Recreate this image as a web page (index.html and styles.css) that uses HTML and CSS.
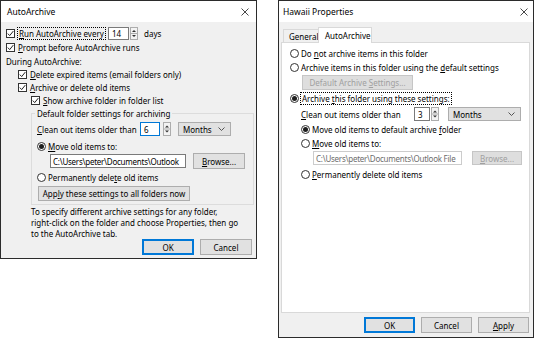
FILE: index.html
```html
<!DOCTYPE html>
<html>
<head>
<meta charset="utf-8">
<title>AutoArchive</title>
<link rel="stylesheet" href="styles.css">
</head>
<body>
<div class="desk">
  <div class="dlg dlg-left">
    <div class="titlebar tl"><span class="title">AutoArchive</span><svg class="close" width="8" height="8" viewBox="0 0 8 8"><path d="M0.5 0.5L7.5 7.5M7.5 0.5L0.5 7.5" stroke="#333" stroke-width="0.9" fill="none"/></svg></div>
    <div class="body">
      <div class="row l1 r1">
        <span class="cb"><svg width="7" height="7" viewBox="0 0 7 7"><polyline points="0.8,3.6 2.7,5.6 6.3,1.1" fill="none" stroke="#222" stroke-width="1"/></svg></span>
        <span class="lblbox w88"><span class="focus"><u>R</u>un AutoArchive every</span></span>
        <span class="input w21">14</span>
        <span class="spinbtn"><svg width="8" height="13" viewBox="0 0 8 13"><rect x="0.5" y="0.5" width="7" height="12" fill="#f3f3f3" stroke="#adadad"/><line x1="1" y1="6.5" x2="7" y2="6.5" stroke="#adadad"/><path d="M2 5h4L4 3z" fill="#333"/><path d="M2 8h4L4 10z" fill="#333"/></svg></span>
        <span class="unit">days</span>
      </div>
      <div class="row l1 gap1">
        <span class="cb"><svg width="7" height="7" viewBox="0 0 7 7"><polyline points="0.8,3.6 2.7,5.6 6.3,1.1" fill="none" stroke="#222" stroke-width="1"/></svg></span>
        <span><u>P</u>rompt before AutoArchive runs</span>
      </div>
      <div class="row l1 gap1"><span>During AutoArchive:</span></div>
      <div class="row l2">
        <span class="cb"><svg width="7" height="7" viewBox="0 0 7 7"><polyline points="0.8,3.6 2.7,5.6 6.3,1.1" fill="none" stroke="#222" stroke-width="1"/></svg></span>
        <span><u>D</u>elete expired items (email folders only)</span>
      </div>
      <div class="row l2">
        <span class="cb"><svg width="7" height="7" viewBox="0 0 7 7"><polyline points="0.8,3.6 2.7,5.6 6.3,1.1" fill="none" stroke="#222" stroke-width="1"/></svg></span>
        <span><u>A</u>rchive or delete old items</span>
      </div>
      <div class="row l3">
        <span class="cb"><svg width="7" height="7" viewBox="0 0 7 7"><polyline points="0.8,3.6 2.7,5.6 6.3,1.1" fill="none" stroke="#222" stroke-width="1"/></svg></span>
        <span><u>S</u>how archive folder in folder list</span>
      </div>
      <fieldset class="group">
        <legend>Default folder settings for archiving</legend>
        <div class="row g1 clean">
          <span class="lblbox w103"><span><u>C</u>lean out items older than</span></span>
          <span class="input w20 focused">6</span>
          <span class="spinbtn sp3"><svg width="8" height="14" viewBox="0 0 8 14"><rect x="0.5" y="0.5" width="7" height="13" fill="#f3f3f3" stroke="#adadad"/><line x1="1" y1="7" x2="7" y2="7" stroke="#adadad"/><path d="M2 5.5h4L4 3.5z" fill="#333"/><path d="M2 8.5h4L4 10.5z" fill="#333"/></svg></span>
          <span class="select w53"><span>Months</span><svg width="7" height="4" viewBox="0 0 7 4"><polyline points="0.5,0.5 3.5,3.5 6.5,0.5" fill="none" stroke="#444" stroke-width="0.9"/></svg></span>
        </div>
        <div class="row g1 mv">
          <span class="rd on"></span><span><u>M</u>ove old items to:</span>
        </div>
        <div class="row path">
          <span class="input w136 pathbox">C:\Users\peter\Documents\Outlook</span>
          <span class="btn w52 ml7"><span><u>B</u>rowse...</span></span>
        </div>
        <div class="row g1 perm">
          <span class="rd"></span><span>Permanently dele<u>t</u>e old items</span>
        </div>
        <div class="row applyrow">
          <span class="btn w152"><span>App<u>l</u>y these settings to all folders now</span></span>
        </div>
      </fieldset>
      <p class="note">To specify different archive settings for any folder,<br>right-click on the folder and choose Properties, then go<br>to the AutoArchive tab.</p>
      <div class="btnrow left-btns">
        <span class="btn w52 default">OK</span>
        <span class="btn w52">Cancel</span>
      </div>
    </div>
  </div>

  <div class="dlg dlg-right">
    <div class="titlebar tr"><span class="title">Hawaii Properties</span><svg class="close" width="8" height="8" viewBox="0 0 8 8"><path d="M0.5 0.5L7.5 7.5M7.5 0.5L0.5 7.5" stroke="#333" stroke-width="0.9" fill="none"/></svg></div>
    <div class="body">
      <div class="tabs">
        <span class="tab">General</span>
        <span class="tab sel">AutoArchive</span>
      </div>
      <div class="panel">
        <div class="row p1 first"><span class="rd"></span><span>Do <u>n</u>ot archive items in this folder</span></div>
        <div class="row p1 m2"><span class="rd"></span><span>Archive items in this folder using the <u>d</u>efault settings</span></div>
        <div class="row defrow"><span class="btn disabled w111"><span>Default Archive <u>S</u>ettings...</span></span></div>
        <div class="row p1 m2"><span class="rd on"></span><span class="focus">Archive <u>t</u>his folder using these settings:</span></div>
        <div class="row p2 clean2">
          <span class="lblbox w114"><span><u>C</u>lean out items older than</span></span>
          <span class="input w16">3</span>
          <span class="spinbtn sp1"><svg width="8" height="14" viewBox="0 0 8 14"><rect x="0.5" y="0.5" width="7" height="13" fill="#f3f3f3" stroke="#adadad"/><line x1="1" y1="7" x2="7" y2="7" stroke="#adadad"/><path d="M2 5.5h4L4 3.5z" fill="#333"/><path d="M2 8.5h4L4 10.5z" fill="#333"/></svg></span>
          <span class="select w73 ml9"><span>Months</span><svg width="7" height="4" viewBox="0 0 7 4"><polyline points="0.5,0.5 3.5,3.5 6.5,0.5" fill="none" stroke="#444" stroke-width="0.9"/></svg></span>
        </div>
        <div class="row p2 m2"><span class="rd on"></span><span>Move old items to default archive <u>f</u>older</span></div>
        <div class="row p2 m2"><span class="rd"></span><span><u>M</u>ove old items to:</span></div>
        <div class="row path2">
          <span class="input w149 disabled-in">C:\Users\peter\Documents\Outlook File</span>
          <span class="btn disabled w50 ml10"><span><u>B</u>rowse...</span></span>
        </div>
        <div class="row p2 m3"><span class="rd"></span><span><u>P</u>ermanently delete old items</span></div>
      </div>
      <div class="btnrow right-btns">
        <span class="btn w51 default">OK</span>
        <span class="btn w51">Cancel</span>
        <span class="btn w51"><span><u>A</u>pply</span></span>
      </div>
    </div>
  </div>
</div>
</body>
</html>
```
FILE: styles.css
```css
* { box-sizing: border-box; }
html, body { margin: 0; padding: 0; }
body {
  background: #fff;
  font-family: "Noto Sans", "Open Sans", sans-serif;
  font-size: 8px;
  color: #000;
  width: 535px;
  height: 339px;
  overflow: hidden;
}
u { text-decoration-thickness: 1px; text-underline-offset: 1px; }

.desk { display: flex; align-items: flex-start; gap: 21px; }

.dlg {
  border: 1px solid #2b2b2b;
  background: #f0f0f0;
  display: flex;
  flex-direction: column;
  flex: none;
}
.dlg-left { width: 257px; height: 259px; }
.dlg-right { width: 256px; height: 338px; }

.titlebar {
  height: 21px;
  background: #fff;
  display: flex;
  align-items: center;
  justify-content: space-between;
  font-size: 8.5px;
  flex: none;
}
.titlebar.tl { padding: 0 7px 0 6px; }
.titlebar.tr { padding: 0 5px 0 4px; }
.close { display: block; }

.body { display: flex; flex-direction: column; flex: 1; }

.row {
  display: flex;
  align-items: center;
  height: 13px;
  white-space: nowrap;
  flex: none;
}
.l1 { margin-left: 5px; }
.l2 { margin-left: 17px; }
.l3 { margin-left: 30px; }
.r1 { margin-top: 5px; }
.gap1 { margin-top: 1px; }

.cb {
  width: 9px; height: 9px;
  border: 1px solid #333;
  background: #fff;
  flex: none;
  margin-right: 3px;
  display: flex; align-items: center; justify-content: center;
}
.cb svg { display: block; }
.rd {
  width: 9px; height: 9px;
  border: 1px solid #333;
  border-radius: 50%;
  background: #fff;
  flex: none;
  margin-right: 2px;
  display: flex; align-items: center; justify-content: center;
}
.rd.on::after {
  content: "";
  width: 5px; height: 5px;
  border-radius: 50%;
  background: #1e1e1e;
}

.focus { outline: 1px dotted #000; outline-offset: 0; padding: 0 1px; }
.lblbox { display: flex; flex: none; }
.w88 { width: 90px; }
.w103 { width: 103px; }
.w114 { width: 113px; }

.input {
  background: #fff;
  border: 1px solid #7a7a7a;
  height: 13px;
  display: flex;
  align-items: center;
  padding-left: 3px;
  flex: none;
  overflow: hidden;
}
.input.focused { border-color: #0078d7; }
.clean .input, .clean2 .input, .path .input, .path2 .input { height: 14px; }
.w21 { width: 21px; }
.w20 { width: 20px; }
.w16 { width: 16px; }
.w136 { width: 136px; }
.w149 { width: 149px; }
.pathbox, .disabled-in { padding-left: 2px; letter-spacing: -0.25px; }
.spinbtn { margin-left: 1px; display: flex; flex: none; }
.spinbtn svg { display: block; }
.sp3 { margin-left: 3px; }
.unit { margin-left: 6px; }

.select {
  height: 14px;
  background: #e1e1e1;
  border: 1px solid #adadad;
  display: flex;
  align-items: center;
  justify-content: space-between;
  padding: 0 5px 0 4px;
  flex: none;
  margin-left: 7px;
}
.select svg { display: block; }
.w53 { width: 53px; }
.w73 { width: 73px; }
.ml9 { margin-left: 9px; }

.btn {
  background: #e1e1e1;
  border: 1px solid #adadad;
  display: flex;
  align-items: center;
  justify-content: center;
  height: 15px;
  flex: none;
}
.btn.default { border-color: #0078d7; box-shadow: inset 0 0 0 1px #0078d7; }
.btn.disabled { background: #dedede; border-color: #c6c6c6; color: #a0a0a0; }
.w52 { width: 52px; }
.w51 { width: 51px; }
.w50 { width: 50px; }
.w111 { width: 111px; }
.w152 { width: 152px; }
.ml7 { margin-left: 7px; }
.ml10 { margin-left: 10px; }

/* group box */
fieldset.group {
  margin: 1px 0 0 30px;
  padding: 0 0 3px 0;
  border: 1px solid #dcdcdc;
  width: 223px;
  min-width: 0;
  flex: none;
}
fieldset.group legend {
  padding: 0 2px;
  margin-left: 3px;
  height: 11px;
  line-height: 11px;
}
.g1 { margin-left: 5px; }
.clean { margin-top: 3px; height: 14px; }
.mv { margin-top: 4px; height: 12px; }
.path { margin-top: 1px; height: 16px; margin-left: 18px; }
.path .btn { height: 16px; }
.pathbox { height: 15px; }
.perm { margin-top: 2px; height: 12px; }
.applyrow { margin-top: 3px; height: 15px; margin-left: 6px; }

.note {
  margin: 1px 0 0 30px;
  line-height: 11px;
  flex: none;
}

.btnrow {
  display: flex;
  justify-content: flex-end;
  gap: 6px;
  flex: none;
}
.btnrow .btn { height: 16px; }
.left-btns { padding-right: 4px; }
.right-btns { margin-top: 4px; padding-right: 4px; gap: 6px; }

/* tabs */
.tabs {
  display: flex;
  align-items: flex-end;
  height: 15px;
  margin: 5px 0 0 4px;
  flex: none;
}
.tab {
  height: 13px;
  padding: 0 5px;
  border: 1px solid #d9d9d9;
  border-bottom: none;
  display: flex;
  align-items: center;
  width: 36px;
}
.tab.sel {
  position: relative;
  height: 16px;
  width: 54px;
  margin-bottom: -1px;
  background: #fff;
  padding: 0 6px;
  margin-left: -1px;
}

.panel {
  margin-left: 2px;
  width: 249px;
  height: 271px;
  border: 1px solid #d9d9d9;
  background: #fff;
  flex: none;
  display: flex;
  flex-direction: column;
}
.panel .row { height: 12px; }
.p1 { margin-left: 8px; }
.p2 { margin-left: 19px; }
.first { margin-top: 4px; }
.m2 { margin-top: 2px; }
.m3 { margin-top: 3px; }
.panel .defrow { margin-top: 2px; margin-left: 20px; height: 15px; }
.panel .clean2 { margin-top: 3px; height: 14px; }
.panel .path2 { margin-top: 2px; margin-left: 31px; height: 14px; }
.path2 .btn { height: 14px; }
.disabled-in { border-color: #cccccc; background: #fff; color: #6d6d6d; }
```
